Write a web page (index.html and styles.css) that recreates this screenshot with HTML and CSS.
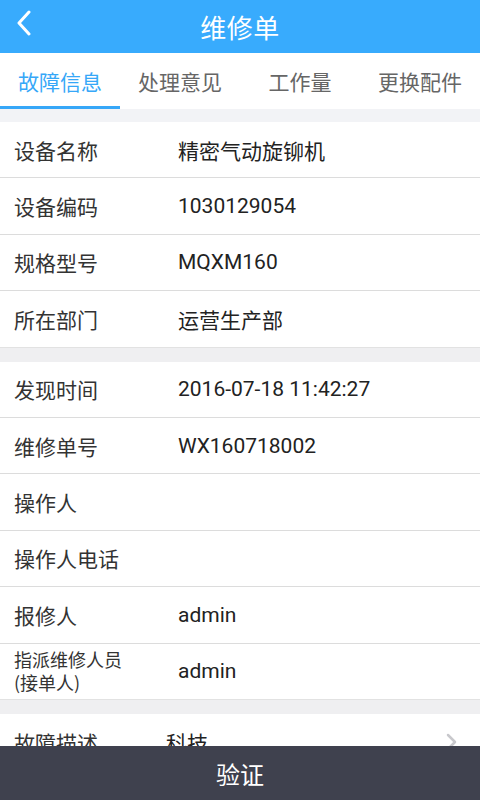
FILE: index.html
```html
<!DOCTYPE html>
<html lang="zh">
<head>
<meta charset="utf-8">
<link rel="stylesheet" href="styles.css">
</head>
<body>
<div class="app">
  <header class="topbar">
    <span class="back">
      <svg width="16" height="26" viewBox="0 0 16 26"><polyline points="13,2 3,13 13,24" fill="none" stroke="#fff" stroke-width="3" stroke-linecap="round" stroke-linejoin="round"/></svg>
    </span>
    <h1 class="title">维修单</h1>
  </header>
  <nav class="tabs">
    <div class="tab active">故障信息</div>
    <div class="tab">处理意见</div>
    <div class="tab">工作量</div>
    <div class="tab">更换配件</div>
  </nav>
  <div class="gap top-gap"></div>
  <section class="group">
    <div class="row"><span class="label">设备名称</span><span class="value">精密气动旋铆机</span></div>
    <div class="row"><span class="label">设备编码</span><span class="value">1030129054</span></div>
    <div class="row"><span class="label">规格型号</span><span class="value">MQXM160</span></div>
    <div class="row"><span class="label">所在部门</span><span class="value">运营生产部</span></div>
  </section>
  <div class="gap"></div>
  <section class="group">
    <div class="row"><span class="label">发现时间</span><span class="value">2016-07-18 11:42:27</span></div>
    <div class="row"><span class="label">维修单号</span><span class="value">WX160718002</span></div>
    <div class="row"><span class="label">操作人</span><span class="value"></span></div>
    <div class="row"><span class="label">操作人电话</span><span class="value"></span></div>
    <div class="row"><span class="label">报修人</span><span class="value">admin</span></div>
    <div class="row"><span class="label small"><span class="line">指派维修人员</span><span class="line">(接单人)</span></span><span class="value">admin</span></div>
  </section>
  <div class="gap"></div>
  <section class="group">
    <div class="row"><span class="label">故障描述</span><span class="value shift">科技</span>
      <svg class="chev" width="12" height="18" viewBox="0 0 12 18"><polyline points="2,2 9,9 2,16" fill="none" stroke="#c8c8cc" stroke-width="2.5" stroke-linecap="round" stroke-linejoin="round"/></svg>
    </div>
  </section>
</div>
<footer class="verify">验证</footer>
</body>
</html>
```
FILE: styles.css
```css
html, body {
  margin: 0;
  padding: 0;
  background: #ffffff;
}
body {
  font-family: "Roboto", "Noto Sans CJK SC", sans-serif;
  width: 480px;
  height: 800px;
  overflow: hidden;
}
.app {
  display: flex;
  flex-direction: column;
}
.topbar {
  height: 53px;
  flex: none;
  background: #38abfd;
  display: flex;
  align-items: center;
  justify-content: center;
  position: relative;
}
.back {
  position: absolute;
  left: 16px;
  top: 10px;
  display: flex;
}
.title {
  margin: 0;
  color: #ffffff;
  font-family: "Noto Sans CJK SC", sans-serif;
  font-weight: 400;
  font-size: 26px;
  letter-spacing: 0.5px;
  line-height: 53px;
}
.tabs {
  display: flex;
  height: 56px;
  flex: none;
  background: #ffffff;
}
.tab {
  flex: 1;
  display: flex;
  align-items: center;
  justify-content: center;
  font-family: "Noto Sans CJK SC", sans-serif;
  font-size: 21px;
  color: #666666;
  box-sizing: border-box;
  border-bottom: 3px solid transparent;
  padding-top: 3px;
}
.tab.active {
  color: #36a7f8;
  border-bottom-color: #36a7f8;
}
.gap {
  height: 14px;
  flex: none;
  background: #efeff1;
}
.top-gap {
  height: 13px;
  background: #f2f3f6;
}
.group {
  background: #ffffff;
  flex: none;
}
.row {
  height: 55.4px;
  display: flex;
  align-items: center;
  border-bottom: 1px solid #dcdcdc;
  padding-left: 14px;
  padding-right: 22px;
  box-sizing: content-box;
}
.group .row:last-child {
  border-bottom: 1px solid #e2e2e2;
}
.label {
  width: 164px;
  flex: none;
  font-family: "Noto Sans CJK SC", sans-serif;
  font-size: 21px;
  color: #333333;
}
.label.small {
  font-size: 18px;
  display: flex;
  flex-direction: column;
}
.label.small .line {
  display: block;
  line-height: 23px;
  height: 23px;
}
.value {
  flex: 1;
  font-family: "Roboto", "Noto Sans CJK SC", sans-serif;
  font-size: 21px;
  color: #222222;
}
.value.shift {
  margin-left: -12px;
}
.chev {
  flex: none;
}
.verify {
  position: fixed;
  left: 0;
  bottom: 0;
  width: 480px;
  height: 54px;
  background: #3f414e;
  color: #ffffff;
  font-family: "Noto Sans CJK SC", sans-serif;
  font-size: 24px;
  display: flex;
  align-items: center;
  justify-content: center;
}
```
